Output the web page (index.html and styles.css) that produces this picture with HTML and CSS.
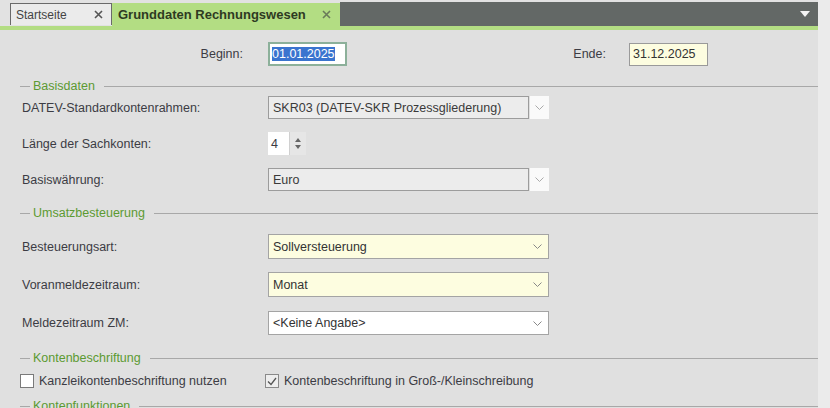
FILE: index.html
```html
<!DOCTYPE html>
<html lang="de">
<head>
  <meta charset="UTF-8" />
  <title>Grunddaten Rechnungswesen</title>
  <link rel="stylesheet" href="styles.css">
</head>
<body>
  <div class="page">
    <div class="main">
      <div class="tabbar">
        <div class="tab">
          <span>Startseite</span>
          <svg class="close" width="9" height="9" viewBox="0 0 9 9"><path d="M1 1L8 8M8 1L1 8" stroke="#555" stroke-width="1.6"/></svg>
        </div>
        <div class="tab active">
          <span>Grunddaten Rechnungswesen</span>
          <svg class="close" width="9" height="9" viewBox="0 0 9 9"><path d="M1 1L8 8M8 1L1 8" stroke="#6a7a5a" stroke-width="1.6"/></svg>
        </div>
        <div class="tab-fill">
          <svg width="10" height="6" viewBox="0 0 10 6"><path d="M0 0H10L5 6Z" fill="#f4f4f4"/></svg>
        </div>
      </div>
      <div class="accent"></div>

      <div class="content">
        <div class="row dates">
          <label class="lbl-beginn">Beginn:</label>
          <div class="input date focus"><span class="sel">01.01.2025</span></div>
          <label class="lbl-ende">Ende:</label>
          <div class="input date yellow">31.12.2025</div>
        </div>

        <div class="group g1"><span>Basisdaten</span></div>
        <div class="row r1">
          <label>DATEV-Standardkontenrahmen:</label>
          <div class="combo disabled">
            <div class="combo-text">SKR03 (DATEV-SKR Prozessgliederung)</div>
            <div class="combo-btn"><svg width="9" height="5" viewBox="0 0 9 5"><path d="M0.5 0.5L4.5 4.5L8.5 0.5" fill="none" stroke="#aaa"/></svg></div>
          </div>
        </div>
        <div class="row r2">
          <label>Länge der Sachkonten:</label>
          <div class="spin">
            <div class="spin-text">4</div>
            <div class="spin-btn">
              <svg width="6" height="4" viewBox="0 0 6 4"><path d="M0 4L3 0L6 4Z" fill="#666"/></svg>
              <svg width="6" height="4" viewBox="0 0 6 4"><path d="M0 0L3 4L6 0Z" fill="#666"/></svg>
            </div>
          </div>
        </div>
        <div class="row r3">
          <label>Basiswährung:</label>
          <div class="combo disabled">
            <div class="combo-text">Euro</div>
            <div class="combo-btn"><svg width="9" height="5" viewBox="0 0 9 5"><path d="M0.5 0.5L4.5 4.5L8.5 0.5" fill="none" stroke="#aaa"/></svg></div>
          </div>
        </div>

        <div class="group g2"><span>Umsatzbesteuerung</span></div>
        <div class="row r4">
          <label>Besteuerungsart:</label>
          <div class="combo yellow">
            <div class="combo-text">Sollversteuerung</div>
            <svg width="9" height="5" viewBox="0 0 9 5"><path d="M0.5 0.5L4.5 4.5L8.5 0.5" fill="none" stroke="#888"/></svg>
          </div>
        </div>
        <div class="row r5">
          <label>Voranmeldezeitraum:</label>
          <div class="combo yellow">
            <div class="combo-text">Monat</div>
            <svg width="9" height="5" viewBox="0 0 9 5"><path d="M0.5 0.5L4.5 4.5L8.5 0.5" fill="none" stroke="#888"/></svg>
          </div>
        </div>
        <div class="row r6">
          <label>Meldezeitraum ZM:</label>
          <div class="combo white">
            <div class="combo-text">&lt;Keine Angabe&gt;</div>
            <svg width="9" height="5" viewBox="0 0 9 5"><path d="M0.5 0.5L4.5 4.5L8.5 0.5" fill="none" stroke="#888"/></svg>
          </div>
        </div>

        <div class="group g3"><span>Kontenbeschriftung</span></div>
        <div class="row checks">
          <div class="check first">
            <span class="box"></span>
            <span>Kanzleikontenbeschriftung nutzen</span>
          </div>
          <div class="check">
            <span class="box"><svg width="10" height="9" viewBox="0 0 10 9"><path d="M1 4.5L4 7.5L9 1" fill="none" stroke="#555" stroke-width="1.3"/></svg></span>
            <span>Kontenbeschriftung in Groß-/Kleinschreibung</span>
          </div>
        </div>

        <div class="group g4"><span>Kontenfunktionen</span></div>
      </div>
    </div>
    <div class="edge"></div>
  </div>
</body>
</html>
```

FILE: styles.css
```css
body {
  margin: 0;
  padding: 0;
  font-family: 'Liberation Sans', Arial, sans-serif;
  font-size: 12.5px;
  color: #3c3c44;
  background: #e0e0e0;
  overflow: hidden;
}
.page {
  display: flex;
  width: 830px;
  height: 408px;
  overflow: hidden;
}
.main {
  width: 818px;
  display: flex;
  flex-direction: column;
}
.edge {
  flex: 1;
  background: #ebebeb;
}
.tabbar {
  flex-shrink: 0;
  display: flex;
  height: 26px;
  padding-left: 10px;
  background: #e2e2e2;
}
.tab {
  display: flex;
  align-items: center;
  justify-content: space-between;
  margin-top: 3px;
  height: 21px;
  width: 89px;
  padding: 0 6px 0 5px;
  background: #ebebeb;
  border: 1px solid #6a6a6a;
  border-bottom: none;
  font-size: 12px;
  color: #444;
}
.tab.active {
  width: 215px;
  height: 23px;
  padding: 0 7px 0 6px;
  background: #b3dd83;
  border: none;
  font-weight: bold;
  font-size: 13px;
  color: #2e3a22;
}
.tab .close {
  margin-right: 2px;
}
.tab-fill {
  flex: 1;
  margin-top: 2px;
  background: #636866;
  display: flex;
  justify-content: flex-end;
  align-items: center;
  padding-right: 8px;
}
.accent {
  flex-shrink: 0;
  height: 4px;
  background: #b3dd83;
}
.content {
  flex: 1;
  display: flex;
  flex-direction: column;
  padding-left: 20px;
  overflow: hidden;
}
.content > * {
  flex-shrink: 0;
}
.row {
  display: flex;
  align-items: center;
}
.row label {
  width: 246px;
  padding-left: 2px;
}
.dates {
  margin-top: 12px;
  height: 24px;
}
.dates label.lbl-beginn {
  width: 221px;
  text-align: right;
  padding-right: 25px;
}
.dates label.lbl-ende {
  width: 259px;
  text-align: right;
  padding-right: 23px;
  padding-left: 0;
}
.input {
  box-sizing: border-box;
  height: 24px;
  display: flex;
  align-items: center;
  padding-left: 3px;
  border: 1px solid #9a9a9a;
  background: #fff;
  color: #333;
}
.date {
  width: 79px;
}
.focus {
  border: 2px solid #8cb09a;
  padding-left: 2px;
}
.sel {
  background: #3a74cf;
  color: #fff;
}
.yellow {
  background: #fdfde0;
}
.input.yellow {
  height: 23px;
}
.group {
  display: flex;
  align-items: center;
  height: 16px;
  color: #5c9a32;
}
.group::before {
  content: "";
  width: 10px;
  height: 1px;
  background: #a8a8a8;
  margin-right: 3px;
}
.group::after {
  content: "";
  flex: 1;
  height: 1px;
  background: #a8a8a8;
  margin-left: 9px;
}
.g1 { margin-top: 12px; }
.g2 { margin-top: 14px; }
.g3 { margin-top: 15px; }
.g4 { margin-top: 9px; }
.r1 { margin-top: 2px; height: 23px; }
.r2 { margin-top: 13px; height: 23px; }
.r3 { margin-top: 13px; height: 23px; }
.r4 { margin-top: 13px; height: 25px; }
.r5 { margin-top: 13px; height: 25px; }
.r6 { margin-top: 14px; height: 24px; }
.combo {
  box-sizing: border-box;
  display: flex;
  align-items: center;
  width: 281px;
  height: 100%;
  border: 1px solid #a4a4a4;
  padding-right: 6px;
}
.combo-text {
  flex: 1;
  padding-left: 4px;
  color: #333;
}
.combo.white {
  background: #fff;
}
.combo.disabled {
  border: none;
  padding-right: 0;
}
.combo.disabled .combo-text {
  box-sizing: border-box;
  height: 100%;
  display: flex;
  align-items: center;
  border: 1px solid #9c9c9c;
  background: #ececec;
  color: #3a3a3a;
}
.combo-btn {
  width: 19px;
  height: 100%;
  margin-left: 1px;
  background: #fafafa;
  display: flex;
  align-items: center;
  justify-content: center;
}
.spin {
  display: flex;
  height: 100%;
  background: #e6e6e6;
}
.spin-text {
  width: 18px;
  padding-left: 3px;
  display: flex;
  align-items: center;
  background: #fff;
}
.spin-btn {
  width: 16px;
  display: flex;
  flex-direction: column;
  align-items: center;
  justify-content: center;
  gap: 3px;
  border-left: 1px solid #d0d0d0;
}
.checks {
  margin-top: 7px;
  height: 16px;
}
.check {
  display: flex;
  align-items: center;
  gap: 5px;
}
.check.first {
  width: 245px;
}
.box {
  box-sizing: border-box;
  width: 14px;
  height: 14px;
  border: 1px solid #7a7a7a;
  background: #fff;
  display: flex;
  align-items: center;
  justify-content: center;
}
.check:last-child .box {
  background: #eeeeee;
  border-color: #8a8a8a;
}
```
